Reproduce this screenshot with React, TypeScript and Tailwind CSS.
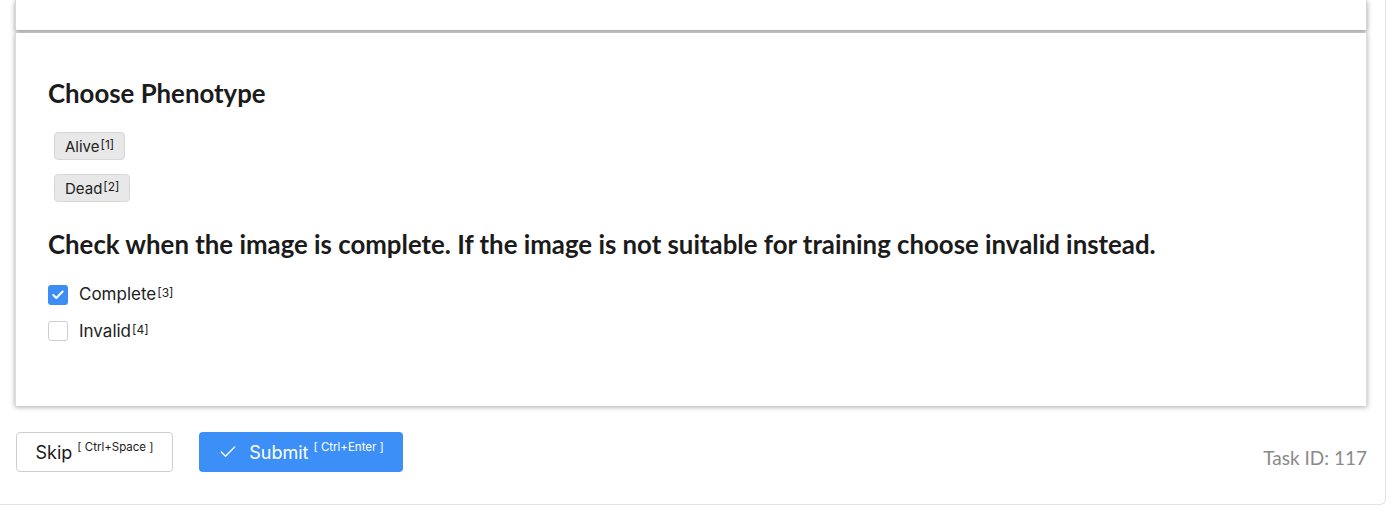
import { Check } from 'lucide-react';

const Sup = ({ children }: { children: React.ReactNode }) => (
    <sup className="text-[12px] relative -top-[3px] ml-px">{children}</sup>
);

export default function App() {
    return (
        <div className="bg-white min-h-[524px] font-['Inter',sans-serif]">
            <div className="w-[1386px] h-[505px] border-r border-b border-[#e3e3e3] rounded-br-md flex flex-col pl-[15px] pr-[18px]">
                {/* previous panel, cut off at the top */}
                <div className="h-[30px] bg-white shadow-[0_2px_5px_rgba(0,0,0,0.4)] border-x border-[#d6d6d6]" />

                <div className="mt-[3px] h-[373px] bg-white shadow-[0_1px_5px_rgba(0,0,0,0.35)] border-x border-[#dcdcdc] pl-[32px] pt-[45px]">
                    <h2 className="font-['Lato',sans-serif] font-bold text-[25.8px] leading-[30px] text-[#1b1b1b]">Choose Phenotype</h2>

                    <div className="flex flex-col items-start gap-[14px] mt-[24px] ml-[6px]">
                        <button className="h-[28px] px-[10px] pt-[2px] bg-[#e8e8e8] border border-[#d6d6d6] rounded text-[15px] text-[#222]">
                            Alive<Sup>[1]</Sup>
                        </button>
                        <button className="h-[28px] px-[10px] pt-[2px] bg-[#e8e8e8] border border-[#d6d6d6] rounded text-[15px] text-[#222]">
                            Dead<Sup>[2]</Sup>
                        </button>
                    </div>

                    <h2 className="font-['Lato',sans-serif] font-bold text-[25.8px] leading-[30px] text-[#1b1b1b] mt-[27px]">
                        Check when the image is complete. If the image is not suitable for training choose invalid instead.
                    </h2>

                    <div className="flex flex-col gap-[11px] mt-[23px]">
                        <label className="flex items-center gap-[11px] text-[17px] text-[#222]">
                            <span className="w-[20px] h-[20px] rounded-[3px] bg-[#3c8ef5] flex items-center justify-center">
                                <Check size={14} strokeWidth={3.5} className="text-white" />
                            </span>
                            <span>
                                Complete<Sup>[3]</Sup>
                            </span>
                        </label>
                        <label className="flex items-center gap-[11px] text-[17px] text-[#222]">
                            <span className="w-[20px] h-[20px] rounded-[3px] border border-[#cfcfcf] bg-white" />
                            <span>
                                Invalid<Sup>[4]</Sup>
                            </span>
                        </label>
                    </div>
                </div>

                <div className="flex items-center mt-[26px] pl-px">
                    <button className="h-[40px] w-[157px] border border-[#cfcfcf] rounded bg-white text-[18px] text-[#1b1b1b] flex items-center justify-center">
                        Skip<sup className="text-[11.5px] ml-[5px] -top-[5px] relative">[ Ctrl+Space ]</sup>
                    </button>
                    <button className="h-[40px] w-[204px] ml-[26px] rounded bg-[#3c8ff7] text-[18px] text-white flex items-center justify-center">
                        <Check size={20} strokeWidth={1.6} className="mr-[11px]" />
                        Submit<sup className="text-[11.5px] ml-[5px] -top-[5px] relative">[ Ctrl+Enter ]</sup>
                    </button>
                    <span className="ml-auto font-['Lato',sans-serif] text-[19px] text-[#8a8a8a] pt-[12px]">Task ID: 117</span>
                </div>
            </div>
        </div>
    );
}
